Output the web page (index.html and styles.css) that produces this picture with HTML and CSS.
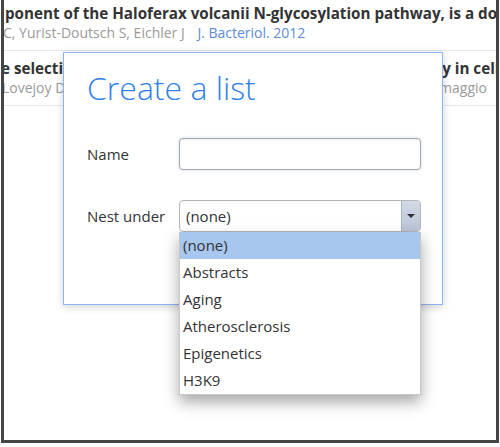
FILE: index.html
```html
<!DOCTYPE html>
<html>
<head>
<meta charset="utf-8">
<link rel="stylesheet" href="styles.css">
</head>
<body>
<div class="frame">
  <div class="results">
    <div class="item">
      <div class="title t1">ponent of the Haloferax volcanii N-glycosylation pathway, is a double-edged sword</div>
      <div class="meta m1">C, Yurist-Doutsch S, Eichler J <span class="journal">J. Bacteriol. 2012</span></div>
    </div>
    <div class="item">
      <div class="title t2">e selective inhibitor histone methyltransferase G9a activity in cells</div>
      <div class="meta m2">Lovejoy D, Smith RJ, Jones AB, Chen XY, Williams PT, Brown K, Di Palmaggio</div>
    </div>
  </div>

  <div class="modal">
    <h1 class="modal-title">Create a list</h1>
    <div class="form">
      <label class="label">Name</label>
      <div class="input"></div>
      <label class="label">Nest under</label>
      <div class="select-wrap">
        <div class="select">
          <span class="select-value">(none)</span>
          <span class="select-btn"><span class="tri"></span></span>
        </div>
        <ul class="options">
          <li class="option selected">(none)</li>
          <li class="option">Abstracts</li>
          <li class="option">Aging</li>
          <li class="option">Atherosclerosis</li>
          <li class="option">Epigenetics</li>
          <li class="option">H3K9</li>
        </ul>
      </div>
    </div>
  </div>
</div>
</body>
</html>
```

FILE: styles.css
```css
html, body {
  margin: 0;
  padding: 0;
  background: #fff;
}
body {
  font-family: "Open Sans", "DejaVu Sans", sans-serif;
  color: #333;
}
.frame {
  position: relative;
  margin: 0 1px;
  height: 443px;
  box-sizing: border-box;
  border: 3px solid #454545;
  border-top: 0;
  overflow: hidden;
}
.results {
  margin-top: -4px;
}
.item {
  padding: 7px 0;
  border-bottom: 1px solid #e6e6e6;
  white-space: nowrap;
  overflow: hidden;
}
.title {
  font-size: 15.2px;
  line-height: 20px;
  font-weight: 700;
  color: #333;
}
.t1 { margin-left: 1px; }
.t2 { margin-left: -3px; }
.meta {
  font-size: 14px;
  line-height: 20px;
  color: #9a9a9a;
}
.m1 { margin-left: -1px; }
.m2 { margin-left: -2px; }
.journal {
  color: #5b8bd8;
  margin-left: 9px;
}

.modal {
  position: absolute;
  left: 59px;
  top: 52px;
  width: 380px;
  height: 253px;
  box-sizing: border-box;
  background: #fff;
  border: 1px solid #8db4f2;
  box-shadow: 0 2px 8px rgba(0,0,0,0.18);
  padding: 15px 0 0 23px;
}
.modal-title {
  margin: 0;
  font-size: 32px;
  line-height: 40px;
  font-weight: 300;
  color: #2f7ff0;
}
.form {
  margin-top: 30px;
  display: grid;
  grid-template-columns: 92px 242px;
  row-gap: 30px;
  align-items: center;
}
.label {
  font-size: 15px;
  color: #333;
}
.input {
  height: 32px;
  box-sizing: border-box;
  border: 1px solid #a9a9a9;
  border-radius: 4px;
  box-shadow: 0 0 3px rgba(120,160,210,0.45), inset 0 1px 2px rgba(0,0,0,0.08);
  background: #fff;
}
.select-wrap {
  position: relative;
}
.select {
  height: 32px;
  box-sizing: border-box;
  border: 1px solid #b5b5b5;
  border-radius: 4px;
  display: flex;
  align-items: center;
  background: #fff;
  overflow: hidden;
}
.select-value {
  flex: 1;
  padding-left: 6px;
  font-size: 15px;
  color: #333;
}
.select-btn {
  width: 18px;
  align-self: stretch;
  border-left: 1px solid #aab4c4;
  background: linear-gradient(#d3dae6, #b9c4d6);
  display: flex;
  align-items: center;
  justify-content: center;
}
.tri {
  width: 0;
  height: 0;
  border-left: 4px solid transparent;
  border-right: 4px solid transparent;
  border-top: 4px solid #333;
}
.options {
  position: absolute;
  left: 0;
  right: 0;
  top: 100%;
  margin: 0;
  padding: 0;
  list-style: none;
  background: #fff;
  border: 1px solid #c8c8c8;
  border-top: 0;
  box-shadow: 0 7px 14px rgba(0,0,0,0.35);
}
.option {
  height: 27px;
  line-height: 27px;
  padding-left: 3px;
  font-size: 15px;
  color: #333;
}
.option.selected {
  background: #a8c7ef;
}
```
